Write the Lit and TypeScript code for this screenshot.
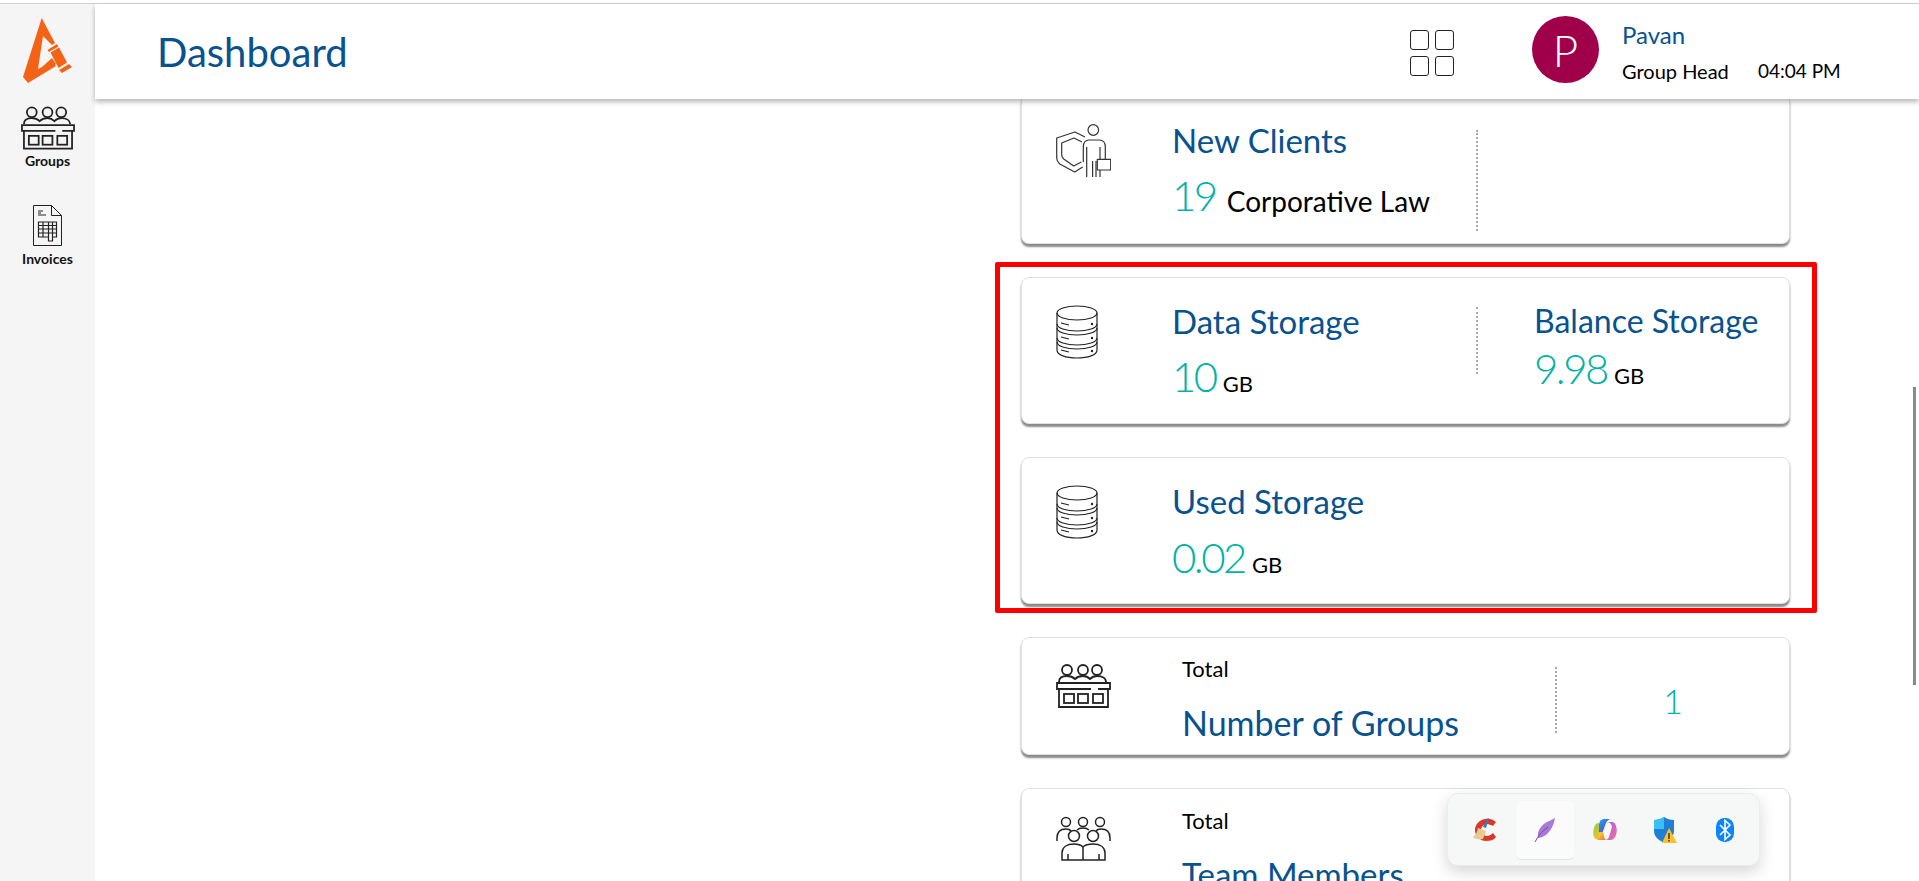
import { LitElement, html, css, svg } from "lit";
import { customElement } from "lit/decorators.js";

const groupsIcon = svg`<g fill="none" stroke="#222" stroke-width="1.8">
  <circle cx="11" cy="6" r="5"/><circle cx="27" cy="6" r="5"/><circle cx="41" cy="6" r="5"/>
  <path d="M3 18c0-4 3-6 8-6 3 0 6 1 8 3 2-2 4-3 8-3s5 1 7 3c2-2 4-3 7-3 5 0 9 2 9 6"/>
  <path d="M35 25H1v-6h53v6h-12"/>
  <path d="M3 25v18h49V25"/>
  <rect x="8" y="30" width="10" height="9"/><rect x="22" y="30" width="10" height="9"/><rect x="37" y="30" width="10" height="9"/>
</g>`;

const dbIcon = svg`<g fill="none" stroke="#222" stroke-width="1.2">
  <ellipse cx="21" cy="8" rx="20" ry="7"/>
  <path d="M1 8v37c0 5 9 8 20 8s20-3 20-8V8"/>
  <path d="M1 19c0 4 9 7 20 7s20-3 20-7M1 23c0 4 9 7 20 7s20-3 20-7M1 33c0 4 9 7 20 7s20-3 20-7M1 37c0 4 9 7 20 7s20-3 20-7"/>
  <path d="M5 18l8 2M5 32l8 2M5 45l8 2"/>
</g>
<g fill="#222"><circle cx="36" cy="19" r="1.2"/><circle cx="36" cy="33" r="1.2"/><circle cx="36" cy="46" r="1.2"/></g>`;

const clientIcon = svg`<g fill="none" stroke="#333" stroke-width="1.2" stroke-linejoin="round">
  <circle cx="37.3" cy="6" r="5.3"/>
  <path d="M27.3 38V23c0-4 2-7 6-7h10c4 0 6 3 6 7v12"/>
  <path d="M30.7 53V23M36.6 53V37M40 53V37M44 35V23M44 46v7"/>
  <rect x="41.3" y="35.3" width="13.4" height="10.7"/>
  <path d="M29 13L19 8 .7 14v20c0 3 1 4 3 6l15 8 8-5"/>
  <path d="M26 18l-8-4-12.300 5v12c0 2 1 3 2 4l10 7 7.700-4"/>
</g>`;

const teamIcon = svg`<g fill="none" stroke="#222" stroke-width="1.5">
  <circle cx="10" cy="6" r="4.500"/><circle cx="27" cy="6" r="4.500"/><circle cx="44" cy="6" r="4.500"/>
  <path d="M1 25v-3c0-6 3-9 9-9 2 0 4 .5 5 2M54 25v-3c0-6-3-9-9-9-2 0-4 .5-5 2M21 14c1-1 3-2 6-2s5 1 6 2"/>
  <circle cx="18" cy="20" r="5.500"/><circle cx="37" cy="20" r="5.500"/>
  <path d="M6 44V37c0-6 5-9 12-9 4 0 7 1 9 3 2-2 5-3 10-3 7 0 12 3 12 9v7zM27 31v13M12 38v6M43 38v6"/>
</g>`;

const invoiceIcon = svg`<g fill="none" stroke="#222" stroke-width="1">
  <path d="M.5.5h18l10 10v30H.5z"/><path d="M18.500.5v10h10"/>
  <path d="M5 6h5M5 8h3M5 10h8"/>
  <path d="M5.500 17h18v15h-4v4h-4v-4h-10zM5.500 20.500h18M5.500 24h18M5.500 28h18M10 17v15M15.500 17v19M19.500 17v19" stroke-width="1.2"/>
</g>`;

interface Side { title: string; value: string; unit: string; }
interface Card { icon: unknown; iconW: number; iconH: number; iconTop: number; title: string; value: string; unit: string; unitClass?: string; side?: Side; divider: number; first?: boolean; rowClass?: string; }

const clients: Card = { icon: clientIcon, iconW: 55, iconH: 54, iconTop: 25, title: "New Clients", value: "19", unit: "Corporative Law", unitClass: "law", divider: 101, first: true };
const data: Card = { icon: dbIcon, iconW: 42, iconH: 54, iconTop: 27, title: "Data Storage", value: "10", unit: "GB", divider: 67, side: { title: "Balance Storage", value: "9.98", unit: "GB" } };
const used: Card = { icon: dbIcon, iconW: 42, iconH: 54, iconTop: 27, title: "Used Storage", value: "0.02", unit: "GB", divider: 0, rowClass: "low" };

@customElement("app-root")
export class AppRoot extends LitElement {
  static styles = css`
    :host { display: block; height: 881px; overflow: hidden; font-family: Lato, "Open Sans", sans-serif; background: #fff; position: relative; }
    .topline { height: 3px; background: #fff; border-bottom: 1px solid #cfcfd4; }
    .layout { display: flex; height: 877px; }
    .sidebar { width: 95px; flex: none; background: #f5f5f5; display: flex; flex-direction: column; align-items: center; }
    .logo { height: 101px; width: 100%; flex: none; }
    .logo svg { display: block; margin-top: 10px; margin-left: 15px; }
    .nav { display: flex; flex-direction: column; align-items: center; color: #111; font-size: 14px; font-weight: 700; line-height: 18px; }
    .nav.g { margin-top: 1px; }
    .nav.g svg { display: block; margin-bottom: 2px; }
    .nav.i { margin-top: 35px; }
    .nav.i svg { display: block; margin-bottom: 3px; }
    .right { flex: 1; min-width: 0; display: flex; flex-direction: column; }
    header { height: 95px; flex: none; display: flex; align-items: center; position: relative; z-index: 2; background: #fff; box-shadow: 0 3px 5px rgba(0,0,0,.28); padding-left: 62px; }
    h1 { margin: 0; font-size: 40px; font-weight: 400; color: #07528f; flex: 1; }
    .apps { display: grid; grid-template-columns: 19px 19px; gap: 6px; margin-right: 78px; margin-top: 3px; }
    .apps i { display: block; box-sizing: border-box; height: 20px; border: 1.6px solid #222; border-radius: 3px; }
    .avatar { width: 67px; height: 67px; border-radius: 50%; background: #a0004a; color: #fff; font-size: 44px; font-weight: 300; display: flex; align-items: center; justify-content: center; margin-top: -4px; }
    .who { margin-left: 23px; width: 297px; color: #000; margin-top: -1px; }
    .name { font-size: 24px; color: #07528f; line-height: 30px; }
    .meta { display: flex; font-size: 20px; line-height: 24px; margin-top: 9px; }
    .meta span:first-child { width: 136px; }
    .meta span:last-child { font-size: 19px; }
    main { flex: 1; min-height: 0; overflow: hidden; padding-left: 926px; }
    .stack { width: 769px; display: flex; flex-direction: column; gap: 33px; }
    .hl { position: relative; display: flex; flex-direction: column; gap: 33px; }
    .hl::after { content: ""; position: absolute; inset: -15px -27px -9px -26px; border: 5px solid #f00; border-radius: 2px; pointer-events: none; }
    .card { box-sizing: border-box; height: 147px; flex: none; background: #fff; border: 1px solid #e0e0e0; border-radius: 8px; box-shadow: 0 3px 2px 0 #8a8a8a; display: flex; position: relative; }
    .card.first { height: 145px; border-top: 0; border-top-left-radius: 0; border-top-right-radius: 0; }
    .card.total { height: 118px; }
    .card.cut { height: 200px; }
    .ic { width: 116px; margin-left: 34px; flex: none; }
    .ic svg { display: block; }
    .body { width: 304px; flex: none; }
    .title { font-size: 33px; line-height: 40px; color: #07528f; white-space: nowrap; }
    .valrow { display: flex; align-items: baseline; white-space: nowrap; margin-top: 11px; line-height: 48px; }
    .valrow.low { margin-top: 12px; }
    .value { font-size: 42px; color: #00b3a4; font-weight: 300; letter-spacing: -2.5px; }
    .unit { font-size: 22px; color: #000; margin-left: 7px; }
    .unit.law { font-size: 28px; margin-left: 11px; position: relative; top: 1px; }
    .divider { width: 0; border-left: 2px dotted #a8a8a8; align-self: flex-start; }
    .side { margin-left: 56px; }
    .side .title { font-size: 32px; }
    .side .valrow { margin-top: 3px; }
    .total .ic { width: 126px; }
    .total .body { width: 373px; }
    .small { font-size: 22px; line-height: 28px; color: #000; }
    .total .title { margin-top: 20px; font-size: 34px; }
    .count { flex: 1; text-align: center; font-size: 34px; color: #00b3a4; font-weight: 300; }
    .scroll { position: absolute; right: 3px; top: 387px; width: 3px; height: 298px; background: #8a8a8a; }
    .tray { position: absolute; left: 1447px; top: 793px; width: 313px; height: 73px; box-sizing: border-box; background: #f6f7f7; border: 1px solid #ececec; border-radius: 11px; box-shadow: 0 6px 16px rgba(0,0,0,.16); display: flex; align-items: center; padding-left: 8px; z-index: 3; }
    .cell { width: 58px; height: 58px; margin-right: 2px; display: flex; align-items: center; justify-content: center; border-radius: 5px; }
    .cell.on { background: #fbfbfb; box-shadow: 0 1px 1px rgba(0,0,0,.08); }
  `;

  private renderStat(c: Card) {
    return html`<div class="card ${c.first ? "first" : ""}">
      <div class="ic"><svg style="margin-top:${c.iconTop}px" width=${c.iconW} height=${c.iconH} viewBox="0 0 ${c.iconW} ${c.iconH}">${c.icon}</svg></div>
      <div class="body" style="padding-top:${c.first ? 21 : 23}px">
        <div class="title">${c.title}</div>
        <div class="valrow ${c.rowClass ?? ""}"><span class="value">${c.value}</span><span class="unit ${c.unitClass ?? ""}">${c.unit}</span></div>
      </div>
      ${c.divider ? html`<div class="divider" style="height:${c.divider}px;margin-top:${c.first ? 31 : 29}px"></div>` : ""}
      ${c.side ? html`<div class="side" style="padding-top:23px">
        <div class="title">${c.side.title}</div>
        <div class="valrow"><span class="value">${c.side.value}</span><span class="unit">${c.side.unit}</span></div>
      </div>` : ""}
    </div>`;
  }

  private tray() {
    return html`<div class="tray">
      <div class="cell"><svg width="26" height="24" viewBox="0 0 26 24">
        <path d="M24 4C21 1 17 0 13 1 7 2 3 7 3 12c0 6 5 11 11 11 4 0 8-1 10-4l-3-4c-2 2-4 3-6 3-3 0-6-3-6-6s3-6 6-6c2 0 4 1 6 2z" fill="#d8392b"/>
        <path d="M15 1l2-1-3 10-3-1z" fill="#2f7fc1"/>
        <path d="M6 10l8 3-3 8c-4 1-8 0-10-2 3-2 4-5 5-9z" fill="#e8c98f"/>
      </svg></div>
      <div class="cell on"><svg width="22" height="24" viewBox="0 0 22 24">
        <path d="M21 0C20 6 17 13 12 17 9 19 6 20 4 20 3 15 5 10 10 6c4-3 8-4 11-6z" fill="#a77ad8"/>
        <path d="M1 24C4 18 8 13 14 9" fill="none" stroke="#7a4cb5" stroke-width="1"/>
      </svg></div>
      <div class="cell"><svg width="24" height="22" viewBox="0 0 24 22">
        <defs>
          <linearGradient id="cp1" x1="0" y1="0" x2="1" y2="1"><stop offset="0" stop-color="#19b5e8"/><stop offset=".5" stop-color="#3f6fe0"/><stop offset="1" stop-color="#7d4fd8"/></linearGradient>
          <linearGradient id="cp2" x1="0" y1="0" x2="1" y2="1"><stop offset="0" stop-color="#7ad04d"/><stop offset=".6" stop-color="#f5c12c"/><stop offset="1" stop-color="#ef5a3c"/></linearGradient>
          <linearGradient id="cp3" x1="0" y1="0" x2="1" y2="1"><stop offset="0" stop-color="#a35ce6"/><stop offset="1" stop-color="#f2709b"/></linearGradient>
        </defs>
        <path d="M7 2c1-1 2-2 4-2h7c-2 0-4 2-5 4L9 15H3z" fill="url(#cp1)"/>
        <path d="M6 4C3 4 2 6 1 9c-1 3-1 7 0 9 1 2 3 3 5 3h8c-2 0-3-2-3-4l-1-4H6z" fill="url(#cp2)"/>
        <path d="M14 3h5c2 0 3 1 4 4 1 3 1 6 0 9-1 3-3 5-6 5h-5c2 0 3-1 4-3l3-10c0-2-2-5-5-5z" fill="url(#cp3)"/>
      </svg></div>
      <div class="cell"><svg width="24" height="26" viewBox="0 0 24 26">
        <path d="M11 0c3 2 6 3 10 3v11c0 6-5 9-10 12C6 23 1 20 1 14V3c4 0 7-1 10-3z" fill="#1f7fd6"/>
        <path d="M11 0c-3 2-6 3-10 3v9h10z" fill="#39c0f0"/>
        <path d="M16 11l8 15H9z" fill="#fbc02d"/>
        <path d="M16 16v6M16 23v1.400" stroke="#222" stroke-width="1.300"/>
      </svg></div>
      <div class="cell"><svg width="18" height="24" viewBox="0 0 18 24">
        <rect width="18" height="24" rx="8.500" fill="#0a84ff"/>
        <path d="M4 7l10 10-5 4.500V2.500L14 7 4 17" fill="none" stroke="#fff" stroke-width="1.600"/>
      </svg></div>
    </div>`;
  }

  render() {
    return html`
      <div class="topline"></div>
      <div class="layout">
        <aside class="sidebar">
          <div class="logo"><svg width="64" height="74" viewBox="15 14 64 74">
            <path fill="#f46315" d="M41.700 18L55 43l-3 2-9-9-5 33 10-5 4-4 4 6-28 17-5-6z"/>
            <path fill="#f46315" d="M47.500 50l9.500-6 1.500 2.500-9.500 5.500zM59 70l10-6 3 3-10 6z"/>
            <path fill="#f46315" d="M50.500 52.500l8.500-5 8 15-8.500 5.500z"/>
            <path fill="#f46315" d="M52 58l4 6-10 7-4-4z"/>
          </svg></div>
          <div class="nav g"><svg width="54" height="44" viewBox="0 0 55 44">${groupsIcon}</svg>Groups</div>
          <div class="nav i"><svg width="30" height="42" viewBox="0 0 30 42">${invoiceIcon}</svg>Invoices</div>
        </aside>
        <div class="right">
          <header>
            <h1>Dashboard</h1>
            <div class="apps"><i></i><i></i><i></i><i></i></div>
            <div class="avatar">P</div>
            <div class="who">
              <div class="name">Pavan</div>
              <div class="meta"><span>Group Head</span><span>04:04 PM</span></div>
            </div>
          </header>
          <main>
            <div class="stack">
              ${this.renderStat(clients)}
              <div class="hl">
                ${this.renderStat(data)}
                ${this.renderStat(used)}
              </div>
              <div class="card total">
                <div class="ic"><svg style="margin-top:26px" width="55" height="44" viewBox="0 0 55 44">${groupsIcon}</svg></div>
                <div class="body" style="padding-top:17px"><div class="small">Total</div><div class="title">Number of Groups</div></div>
                <div class="divider" style="height:66px;margin-top:29px"></div>
                <div class="count" style="padding-top:42px">1</div>
              </div>
              <div class="card cut">
                <div class="ic"><svg style="margin-top:27px" width="55" height="46" viewBox="0 0 55 46">${teamIcon}</svg></div>
                <div class="body" style="padding-top:18px;margin-left:10px"><div class="small">Total</div><div class="title" style="margin-top:19px">Team Members</div></div>
              </div>
            </div>
          </main>
        </div>
      </div>
      <div class="scroll"></div>
      ${this.tray()}
    `;
  }
}
